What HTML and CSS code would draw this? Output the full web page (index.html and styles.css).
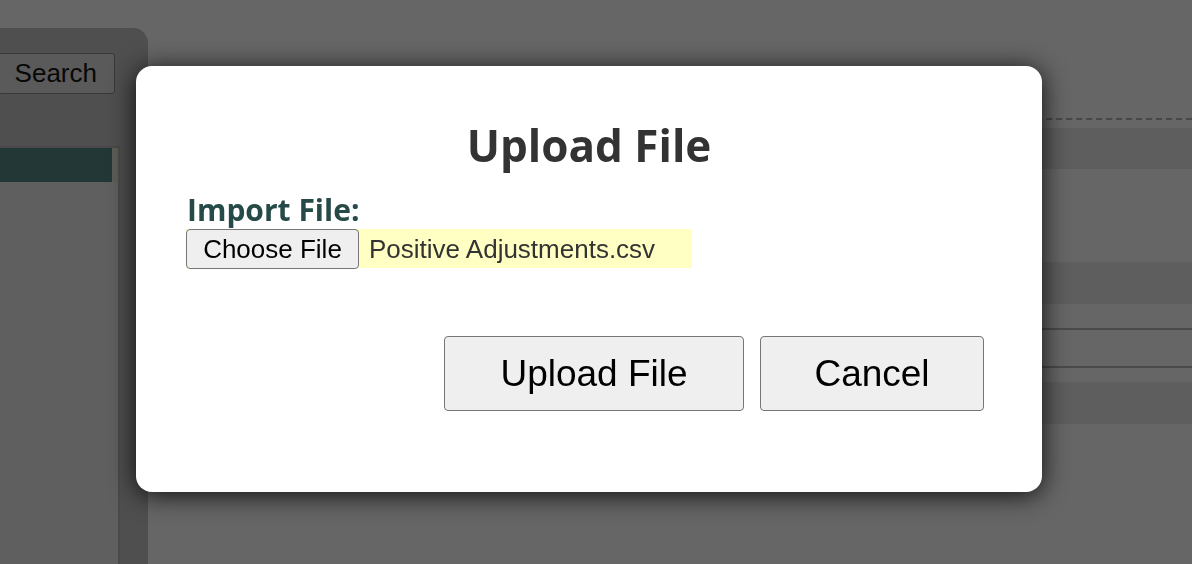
FILE: index.html
```html
<!DOCTYPE html>
<html lang="en">
<head>
<meta charset="utf-8">
<title>Upload File</title>
<link rel="stylesheet" href="styles.css">
</head>
<body>
<div class="page">
  <aside class="sidebar">
    <div class="search-row">
      <button class="search-btn" type="button">Search</button>
    </div>
    <div class="list-box">
      <div class="list-head">
        <div class="list-head-fill"></div>
        <div class="list-head-scroll"></div>
      </div>
    </div>
  </aside>
  <main class="content">
    <div class="dashed-rule"></div>
    <div class="band band-1"></div>
    <div class="band band-2"></div>
    <div class="rule rule-1"></div>
    <div class="rule rule-2"></div>
    <div class="band band-3"></div>
  </main>
</div>

<div class="modal" role="dialog" aria-labelledby="modal-title">
  <h1 class="modal-title" id="modal-title">Upload File</h1>
  <div class="field-label">Import File:</div>
  <div class="file-input">
    <button class="choose-btn" type="button">Choose File</button>
    <span class="file-name">Positive Adjustments.csv</span>
  </div>
  <div class="actions">
    <button class="action-btn action-btn-upload" type="button">Upload File</button>
    <button class="action-btn action-btn-cancel" type="button">Cancel</button>
  </div>
</div>
</body>
</html>
```

FILE: styles.css
```css
* {
  box-sizing: border-box;
}

html, body {
  margin: 0;
  padding: 0;
  height: 100%;
}

body {
  background: #666666;
  font-family: "Liberation Sans", Arial, sans-serif;
  overflow: hidden;
}

.page {
  display: flex;
  height: 564px;
}

/* ---------- sidebar ---------- */
.sidebar {
  width: 148px;
  flex: 0 0 148px;
  margin-top: 28px;
  background: #4f4f4f;
  border-top-right-radius: 15px;
  display: flex;
  flex-direction: column;
}

.search-row {
  width: 115px;
  display: flex;
  justify-content: flex-end;
  margin-top: 25px;
}

.search-btn {
  flex: 0 0 auto;
  height: 41px;
  padding: 0 17px 0 16px;
  background: #5a5a5a;
  border: 1px solid #393939;
  border-radius: 3px;
  color: #080808;
  font-family: "Liberation Sans", Arial, sans-serif;
  font-size: 26px;
  line-height: 39px;
}

.list-box {
  width: 120px;
  flex: 1;
  margin-top: 52px;
  background: #5f5f5f;
  border-top: 2px solid #494949;
  border-right: 2px solid #4a4a4a;
}

.list-head {
  display: flex;
  height: 34px;
}

.list-head-fill {
  width: 112px;
  background: #233836;
}

.list-head-scroll {
  flex: 1;
  background: #5c5c57;
}

/* ---------- main content (behind modal) ---------- */
.content {
  flex: 1;
  display: flex;
  flex-direction: column;
  padding-top: 118px;
}

.dashed-rule {
  border-top: 2px dashed #474747;
}

.band {
  background: #5e5e5e;
}

.band-1 {
  height: 41px;
  margin-top: 8px;
}

.band-2 {
  height: 42px;
  margin-top: 93px;
}

.rule {
  height: 2px;
  background: #4a4a4a;
}

.rule-1 {
  margin-top: 24px;
}

.rule-2 {
  margin-top: 36px;
}

.band-3 {
  height: 42px;
  margin-top: 14px;
}

/* ---------- modal ---------- */
.modal {
  position: fixed;
  left: 136px;
  top: 66px;
  width: 906px;
  height: 426px;
  background: #ffffff;
  border-radius: 16px;
  box-shadow: 0 3px 26px rgba(0, 0, 0, 0.85);
  padding: 53px 50px 0;
  display: flex;
  flex-direction: column;
  align-items: flex-start;
}

.modal-title {
  align-self: stretch;
  margin: 0;
  text-align: center;
  font-family: "Open Sans", "DejaVu Sans", sans-serif;
  font-weight: 700;
  font-size: 44px;
  line-height: 52px;
  color: #333333;
}

.field-label {
  margin-top: 21px;
  margin-left: 1px;
  font-family: "Open Sans", "DejaVu Sans", sans-serif;
  font-weight: 700;
  font-size: 30px;
  line-height: 36px;
  color: #264a47;
}

.file-input {
  margin-top: 1px;
  display: flex;
  align-items: flex-start;
  width: 506px;
  background: #ffffc4;
  height: 39px;
}

.choose-btn {
  height: 40px;
  width: 173px;
  padding: 0;
  background: #efefef;
  border: 1px solid #767676;
  border-radius: 4px;
  color: #000000;
  font-family: "Liberation Sans", Arial, sans-serif;
  font-size: 26px;
  line-height: 38px;
}

.file-name {
  padding-left: 10px;
  font-family: "Liberation Sans", Arial, sans-serif;
  font-size: 26px;
  line-height: 40px;
  color: #333333;
}

.actions {
  align-self: stretch;
  margin-top: 68px;
  margin-right: 8px;
  display: flex;
  justify-content: flex-end;
  gap: 16px;
}

.action-btn {
  height: 75px;
  padding: 0;
  background: #efefef;
  border: 1px solid #767676;
  border-radius: 4px;
  color: #000000;
  font-family: "Liberation Sans", Arial, sans-serif;
  font-size: 37px;
  line-height: 73px;
}

.action-btn-upload {
  width: 300px;
}

.action-btn-cancel {
  width: 224px;
}
```
